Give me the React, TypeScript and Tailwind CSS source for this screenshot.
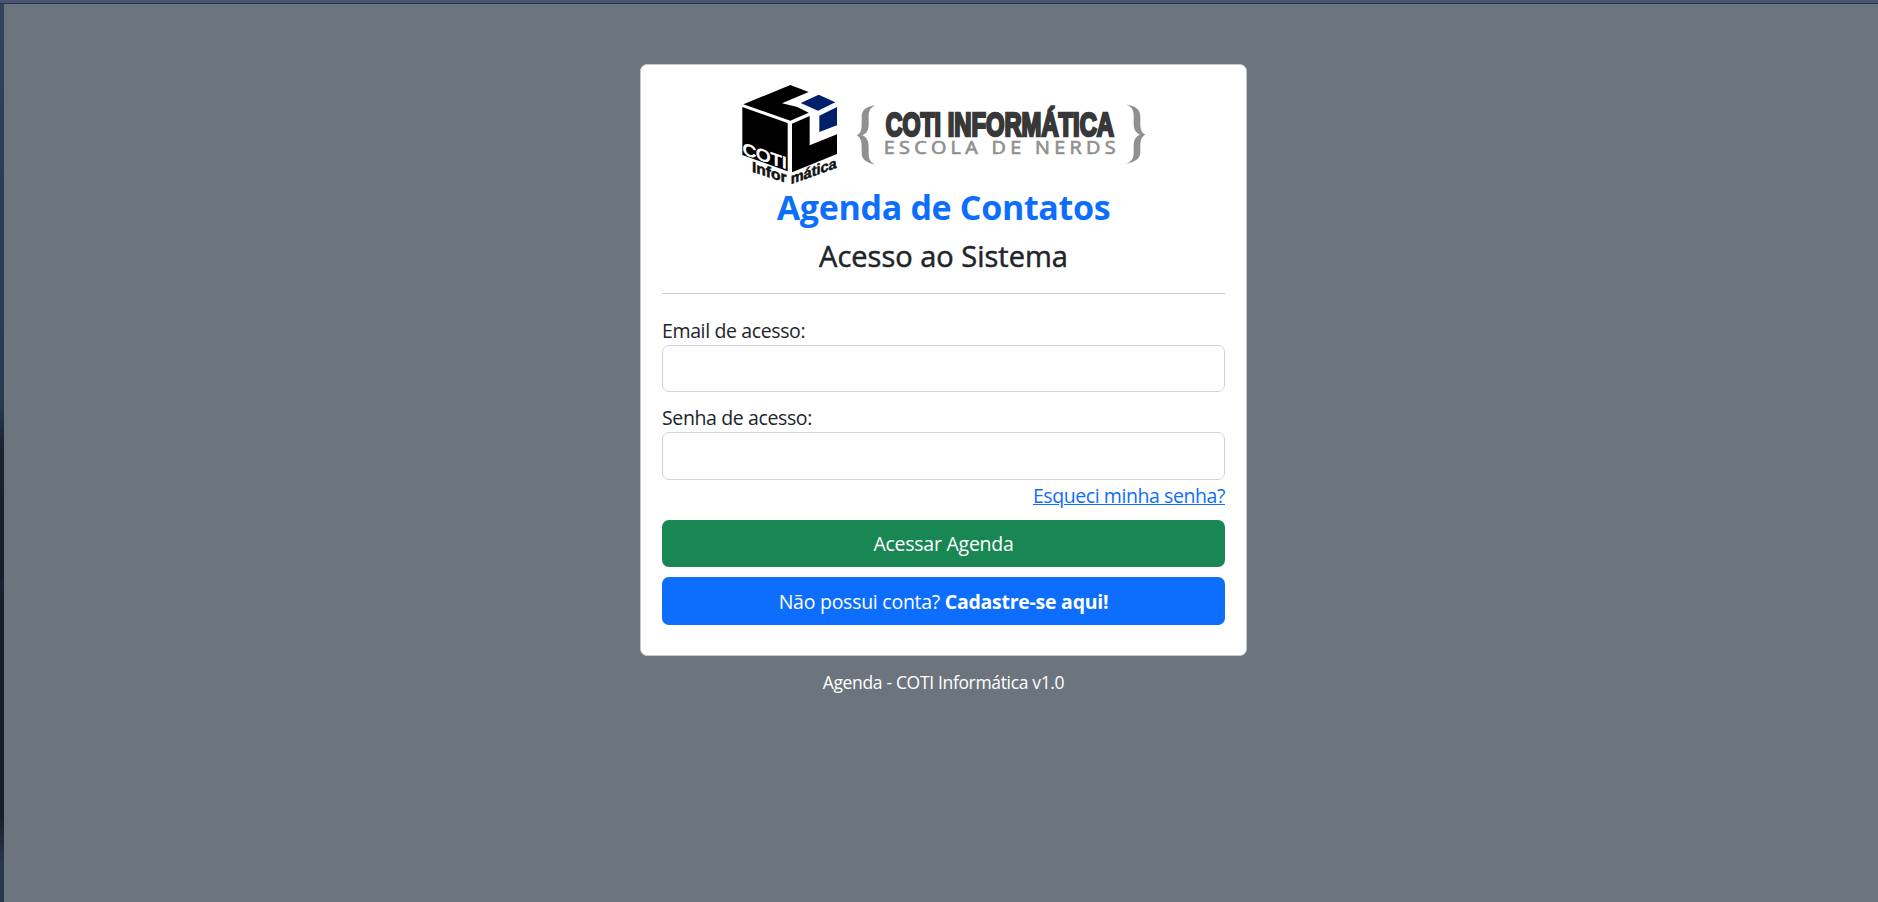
import React from "react";

function Logo() {
  return (
    <svg viewBox="0 0 1275 345" className="-ml-[2px] block h-[115px] w-[425px] shrink-0 overflow-visible" role="img" aria-label="COTI Informática">
      <path d="M40 88 181 30 236 51 156 85 202 96 236 113 181 137Z" fill="#000" />
      <path d="M212 84 266 59 316 82 264 107Z" fill="#00206b" />
      <path d="M268 122 321 96V151L268 171Z" fill="#00206b" />
      <path d="M186 146 239 123V211L321 178V237L186 292Z" fill="#000" />
      <path d="M37 96 173 144V289L37 240Z" fill="#000" />
      <g fontFamily="'Liberation Sans', sans-serif">
        <text transform="matrix(1 .34 0 1 38 237)" fontSize="49" textLength="133" lengthAdjust="spacingAndGlyphs" fill="#fff" stroke="#fff" strokeWidth="2.5">COTI</text>
        <text transform="matrix(1 .33 0 1 66 290)" fontSize="45" fontWeight="700" textLength="104" lengthAdjust="spacingAndGlyphs" fill="#111" stroke="#111" strokeWidth="1.5">Infor</text>
        <text transform="matrix(1 -.36 0 1 182 328)" fontSize="45" fontWeight="700" textLength="138" lengthAdjust="spacingAndGlyphs" fill="#111" stroke="#111" strokeWidth="1.5">mática</text>
      </g>
      <g fill="#909090">
        <path d="M436 91C402 97 395 107 395 128V147C395 165 392 176 380 181C392 187 395 199 395 217V233C395 252 407 262 435 269C420 261 416 252 416 235V217C416 198 411 187 397 181C411 175 416 165 416 147V125C416 107 421 98 436 91Z" />
        <path d="M1188 88C1220 95 1231 104 1231 126V145C1231 163 1234 173 1246 179C1234 185 1231 197 1231 215V231C1231 250 1218 260 1188 267C1205 259 1211 249 1211 233V215C1211 195 1216 185 1230 179C1216 173 1211 163 1211 145V123C1211 105 1205 96 1188 88Z" />
      </g>
      <g fontFamily="'Liberation Sans', sans-serif" fontSize="102" fontWeight="700" fill="#383838" stroke="#383838" strokeWidth="8">
        <text x="467" y="182" textLength="166" lengthAdjust="spacingAndGlyphs">COTI</text>
        <text x="653" y="182" textLength="499" lengthAdjust="spacingAndGlyphs">INFORMÁTICA</text>
      </g>
      <g transform="translate(461 238) scale(1.12 1)">
        <text fontFamily="'Open Sans', sans-serif" fontSize="53" textLength="621" lengthAdjust="spacing" fill="#909090" stroke="#909090" strokeWidth="2">ESCOLA DE NERDS</text>
      </g>
    </svg>
  );
}

type FieldProps = { id: string; label: string; type: string; inputClass: string; labelClass: string };

function Field({ id, label, type, inputClass, labelClass }: FieldProps) {
  return (
    <div className="flex flex-col">
      <label htmlFor={id} className={`h-[30px] self-start whitespace-nowrap text-[19.5px] leading-[32px] ${labelClass}`}>{label}</label>
      <input id={id} type={type} className={`w-full rounded-[7px] border border-[#ced4da] bg-white px-4 outline-none ${inputClass}`} />
    </div>
  );
}

export default function App() {
  return (
    <div className="flex h-screen w-full flex-col overflow-hidden bg-[#6c757d] font-['Open_Sans','Noto_Sans',sans-serif] text-[#212529]">
      <div className="h-1 shrink-0 border-b border-[#26304f] bg-[#4a5570]" />
      <div className="flex min-h-0 flex-1">
        <div className="w-1 shrink-0 bg-[linear-gradient(to_bottom,#34425a_0,#2b3a50_330px,#283a4c_400px,#1c2432_440px,#171d28_570px,#1b2534_580px,#171d28_600px,#171d28_810px,#2b384b_860px,#2b384b_100%)]" />
        <main className="flex flex-1 flex-col items-center pt-[60px]">
          <section className="ml-[5px] flex h-[592px] w-[607px] flex-col rounded-[7px] border border-[#c4c7ca] bg-white px-[21px] pt-[10px]">
            <div className="flex h-[111px] justify-center"><Logo /></div>
            <h1 className="flex h-[42px] items-center justify-center whitespace-nowrap text-[34px] font-bold tracking-[-0.33px] text-[#0d6efd]">Agenda de Contatos</h1>
            <h2 className="mt-[6px] flex h-[44px] items-center justify-center whitespace-nowrap text-[29px] font-medium [-webkit-text-stroke:0.5px_#212529]">Acesso ao Sistema</h2>
            <hr className="mt-[15px] border-[#c8cacc]" />
            <form className="mt-[21px] flex flex-col">
              <Field id="email" label="Email de acesso:" type="email" inputClass="h-[47px]" labelClass="tracking-[-0.37px]" />
              <div className="h-[10px]" />
              <Field id="senha" label="Senha de acesso:" type="password" inputClass="h-[48px]" labelClass="tracking-[-0.38px]" />
              <a href="#" className="mt-px h-[30px] self-end whitespace-nowrap text-[19.5px] leading-[30px] tracking-[-0.42px] text-[#0d6efd] underline">Esqueci minha senha?</a>
              <button type="button" className="mt-[9px] h-[47px] rounded-[7px] bg-[#198754] text-[19.5px] tracking-[-0.25px] text-white">Acessar Agenda</button>
              <button type="button" className="mt-[10px] h-[48px] rounded-[7px] bg-[#0d6efd] pt-[2px] text-[19.5px] tracking-[-0.26px] text-white">Não possui conta? <strong>Cadastre-se aqui!</strong></button>
            </form>
          </section>
          <p className="mt-[11px] ml-[5px] whitespace-nowrap text-[17.5px] leading-[30px] tracking-[-0.34px] text-white">Agenda - COTI Informática v1.0</p>
        </main>
      </div>
    </div>
  );
}
